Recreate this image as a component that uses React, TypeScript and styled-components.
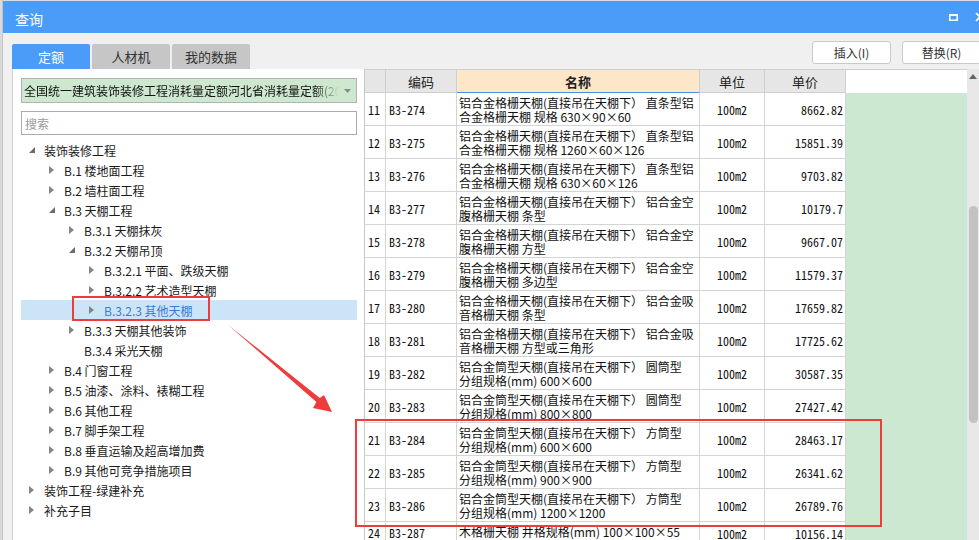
import React from "react";
import styled, { createGlobalStyle } from "styled-components";

const CJK = `"Noto Sans CJK SC", "Noto Sans", sans-serif`;
const MONO = `"Noto Sans Mono CJK SC", "Liberation Mono", monospace`;

const GlobalStyle = createGlobalStyle`
  html, body { margin: 0; padding: 0; }
  body { font-family: ${CJK}; font-size: 12px; color: #1a1a1a; }
  * { box-sizing: border-box; }
`;

const Page = styled.div`
  position: relative;
  width: 979px;
  height: 540px;
  overflow: hidden;
  display: flex;
  background: #e4e4e4;
`;

const Backdrop = styled.div`
  width: 3px;
  flex-shrink: 0;
  background: #dadada;
  border-right: 1px solid #c4c4c4;
`;

const Window = styled.div`
  flex: 1;
  min-width: 0;
  display: flex;
  flex-direction: column;
  background: #f0f0f0;
  border-top: 1px solid #d5dbe3;
`;

const TitleBar = styled.div`
  height: 32px;
  flex-shrink: 0;
  background: #4b9cf8;
  display: flex;
  align-items: center;
  padding: 3px 0 0 12px;
  color: #fff;
  font-size: 14px;
`;

const TitleIcons = styled.div`
  margin-left: auto;
  display: flex;
  align-items: center;
  gap: 17px;
  margin-right: -6px;
  padding-bottom: 3px;
`;

const Toolbar = styled.div`
  height: 36px;
  flex-shrink: 0;
  display: flex;
  padding-left: 9px;
`;

const Tabs = styled.div`
  display: flex;
  gap: 2px;
  align-self: flex-end;
`;

const Tab = styled.div<{ $active?: boolean }>`
  width: 78px;
  height: 25px;
  border-radius: 2px 2px 0 0;
  display: flex;
  align-items: center;
  justify-content: center;
  font-size: 13px;
  background: ${(p) => (p.$active ? "#4b9cf8" : "#c6c6c6")};
  color: ${(p) => (p.$active ? "#fff" : "#333")};
`;

const Actions = styled.div`
  margin-left: auto;
  margin-right: -2px;
  display: flex;
  gap: 11px;
  padding-top: 8px;
`;

const ActionButton = styled.div`
  width: 79px;
  height: 23px;
  background: #fff;
  border: 1px solid #c9c9c9;
  border-radius: 3px;
  display: flex;
  align-items: center;
  justify-content: center;
  font-size: 12px;
  color: #333;
`;

const Content = styled.div`
  flex: 1;
  min-height: 0;
  display: flex;
`;

const LeftPanel = styled.div`
  margin-left: 9px;
  width: 352px;
  flex-shrink: 0;
  background: #fff;
  border-left: 1px solid #d2d2d2;
  padding: 9px 7px 0 8px;
  display: flex;
  flex-direction: column;
`;

const Dropdown = styled.div`
  height: 25px;
  background: #cde8cf;
  border: 1px solid #b3b3b3;
  display: flex;
  align-items: center;
  padding-left: 2px;
`;

const DropdownText = styled.div`
  flex: 1;
  overflow: hidden;
  white-space: nowrap;
  font-size: 12px;
  color: #111;
  -webkit-mask-image: linear-gradient(to right, #000 92%, transparent 100%);
  mask-image: linear-gradient(to right, #000 92%, transparent 100%);
`;

const DropdownArrow = styled.div`
  width: 17px;
  display: flex;
  justify-content: center;
`;

const Search = styled.input`
  margin-top: 8px;
  height: 24px;
  border: 1px solid #ababab;
  padding: 0 0 0 3px;
  font-family: ${CJK};
  font-size: 12px;
  outline: none;
  &::placeholder { color: #9a9a9a; }
`;

const Tree = styled.div`
  margin-top: 5px;
  display: flex;
  flex-direction: column;
`;

const TreeRow = styled.div<{ $level: number; $selected?: boolean }>`
  height: 20px;
  display: flex;
  align-items: center;
  padding-left: ${(p) => 8 + p.$level * 20}px;
  background: ${(p) => (p.$selected ? "#cce4f7" : "transparent")};
  color: ${(p) => (p.$selected ? "#3a7bd5" : "#1a1a1a")};
  font-size: 12px;
  white-space: nowrap;
`;

const Toggle = styled.div`
  width: 15px;
  height: 20px;
  display: flex;
  align-items: center;
`;

const RightPanel = styled.div`
  flex: 1;
  min-width: 0;
  display: flex;
  border-left: 1px solid #c8c8c8;
`;

const Table = styled.div`
  width: 602px;
  flex-shrink: 0;
  display: flex;
  flex-direction: column;
  background: #fff;
`;

const COLS = "21px 71px 243px 65px 81px 121px";

const HeadRow = styled.div`
  display: grid;
  grid-template-columns: ${COLS};
  height: 24px;
  border-top: 1px solid #cfcfcf;
  flex-shrink: 0;
`;

const HeadCell = styled.div<{ $kind?: "name" | "blank" }>`
  display: flex;
  align-items: center;
  justify-content: center;
  font-size: 13px;
  color: #222;
  background: ${(p) => (p.$kind === "name" ? "#fee6c9" : p.$kind === "blank" ? "#fff" : "#e6e6e6")};
  border-right: ${(p) => (p.$kind === "blank" ? "none" : "1px solid #cfcfcf")};
  border-bottom: ${(p) =>
    p.$kind === "blank" ? "none" : p.$kind === "name" ? "1px solid #4a8fe0" : "1px solid #cfcfcf"};
  font-weight: ${(p) => (p.$kind === "name" ? 700 : 400)};
`;

const BodyRow = styled.div<{ $h: number }>`
  display: grid;
  grid-template-columns: ${COLS};
  height: ${(p) => p.$h}px;
  flex-shrink: 0;
`;

const Cell = styled.div`
  border-right: 1px solid #d4d4d4;
  border-bottom: 1px solid #d4d4d4;
  display: flex;
  align-items: center;
  overflow: hidden;
  white-space: nowrap;
  color: #111;
`;

const IndexCell = styled(Cell)`
  font-family: ${MONO};
  font-size: 12px;
  padding-left: 3px;
`;

const CodeCell = styled(Cell)`
  font-family: ${MONO};
  font-size: 12px;
  padding-left: 3px;
`;

const NameCell = styled(Cell)`
  flex-direction: column;
  align-items: flex-start;
  padding: 3px 0 0 2px;
  font-size: 12px;
  line-height: 13.5px;
`;

const UnitCell = styled(Cell)`
  justify-content: center;
  font-family: ${MONO};
  font-size: 12px;
  padding-top: 1px;
`;

const PriceCell = styled(Cell)`
  justify-content: flex-end;
  padding: 1px 2px 0 0;
  font-family: ${MONO};
  font-size: 12px;
`;

const GreenCell = styled.div`
  background: #cde8d0;
`;

const ScrollTrack = styled.div`
  width: 12px;
  flex-shrink: 0;
  background: #e8e8e8;
  display: flex;
  flex-direction: column;
  align-items: center;
  padding-top: 5px;
`;

const Thumb = styled.div`
  margin-top: 127px;
  width: 9px;
  height: 217px;
  border-radius: 5px;
  background: #c2c2c2;
`;

const RedBox = styled.div<{ $x: number; $y: number; $w: number; $h: number }>`
  position: absolute;
  left: ${(p) => p.$x}px;
  top: ${(p) => p.$y}px;
  width: ${(p) => p.$w}px;
  height: ${(p) => p.$h}px;
  border: 2px solid #ef3b3b;
  pointer-events: none;
`;

const ArrowSvg = styled.svg`
  position: absolute;
  left: 0;
  top: 0;
  pointer-events: none;
`;

type Node = { l: number; s: "open" | "closed" | "leaf"; t: string; sel?: boolean };

const tree: Node[] = [
  { l: 0, s: "open", t: "装饰装修工程" },
  { l: 1, s: "closed", t: "B.1 楼地面工程" },
  { l: 1, s: "closed", t: "B.2 墙柱面工程" },
  { l: 1, s: "open", t: "B.3 天棚工程" },
  { l: 2, s: "closed", t: "B.3.1 天棚抹灰" },
  { l: 2, s: "open", t: "B.3.2 天棚吊顶" },
  { l: 3, s: "closed", t: "B.3.2.1 平面、跌级天棚" },
  { l: 3, s: "closed", t: "B.3.2.2 艺术造型天棚" },
  { l: 3, s: "closed", t: "B.3.2.3 其他天棚", sel: true },
  { l: 2, s: "closed", t: "B.3.3 天棚其他装饰" },
  { l: 2, s: "leaf", t: "B.3.4 采光天棚" },
  { l: 1, s: "closed", t: "B.4 门窗工程" },
  { l: 1, s: "closed", t: "B.5 油漆、涂料、裱糊工程" },
  { l: 1, s: "closed", t: "B.6 其他工程" },
  { l: 1, s: "closed", t: "B.7 脚手架工程" },
  { l: 1, s: "closed", t: "B.8 垂直运输及超高增加费" },
  { l: 1, s: "closed", t: "B.9 其他可竞争措施项目" },
  { l: 0, s: "closed", t: "装饰工程-绿建补充" },
  { l: 0, s: "closed", t: "补充子目" },
];

const G = "铝合金格栅天棚(直接吊在天棚下） ";
const T = "铝合金筒型天棚(直接吊在天棚下） ";

type Row = { n: number; code: string; name: string[]; price: string };

const rows: Row[] = [
  { n: 11, code: "B3-274", name: [G + "直条型铝", "合金格栅天棚 规格 630×90×60"], price: "8662.82" },
  { n: 12, code: "B3-275", name: [G + "直条型铝", "合金格栅天棚 规格 1260×60×126"], price: "15851.39" },
  { n: 13, code: "B3-276", name: [G + "直条型铝", "合金格栅天棚 规格 630×60×126"], price: "9703.82" },
  { n: 14, code: "B3-277", name: [G + "铝合金空", "腹格栅天棚 条型"], price: "10179.7" },
  { n: 15, code: "B3-278", name: [G + "铝合金空", "腹格栅天棚 方型"], price: "9667.07" },
  { n: 16, code: "B3-279", name: [G + "铝合金空", "腹格栅天棚 多边型"], price: "11579.37" },
  { n: 17, code: "B3-280", name: [G + "铝合金吸", "音格栅天棚 条型"], price: "17659.82" },
  { n: 18, code: "B3-281", name: [G + "铝合金吸", "音格栅天棚 方型或三角形"], price: "17725.62" },
  { n: 19, code: "B3-282", name: [T + "圆筒型", "分组规格(mm) 600×600"], price: "30587.35" },
  { n: 20, code: "B3-283", name: [T + "圆筒型", "分组规格(mm) 800×800"], price: "27427.42" },
  { n: 21, code: "B3-284", name: [T + "方筒型", "分组规格(mm) 600×600"], price: "28463.17" },
  { n: 22, code: "B3-285", name: [T + "方筒型", "分组规格(mm) 900×900"], price: "26341.62" },
  { n: 23, code: "B3-286", name: [T + "方筒型", "分组规格(mm) 1200×1200"], price: "26789.76" },
  { n: 24, code: "B3-287", name: ["木格栅天棚 井格规格(mm) 100×100×55"], price: "10156.14" },
];

const ToggleIcon = ({ s }: { s: Node["s"] }) => {
  if (s === "leaf") return null;
  if (s === "open")
    return (
      <svg width="6" height="6" viewBox="0 0 6 6">
        <polygon points="6,0 6,6 0,6" fill="#6b6b6b" />
      </svg>
    );
  return (
    <svg width="5" height="8" viewBox="0 0 5 8">
      <polygon points="0,0 5,4 0,8" fill="#858585" />
    </svg>
  );
};

export default function App() {
  return (
    <>
      <GlobalStyle />
      <Page>
        <Backdrop />
        <Window>
          <TitleBar>
            查询
            <TitleIcons>
              <svg width="9" height="7" viewBox="0 0 9 7">
                <rect x="0.75" y="1" width="7.5" height="5.25" fill="none" stroke="#fff" strokeWidth="1.5" />
                <rect x="0" y="0" width="9" height="2" fill="#fff" />
              </svg>
              <svg width="10" height="10" viewBox="0 0 10 10">
                <path d="M1 1 L9 9 M9 1 L1 9" stroke="#fff" strokeWidth="1.6" />
              </svg>
            </TitleIcons>
          </TitleBar>
          <Toolbar>
            <Tabs>
              <Tab $active>定额</Tab>
              <Tab>人材机</Tab>
              <Tab>我的数据</Tab>
            </Tabs>
            <Actions>
              <ActionButton>插入(I)</ActionButton>
              <ActionButton>替换(R)</ActionButton>
            </Actions>
          </Toolbar>
          <Content>
            <LeftPanel>
              <Dropdown>
                <DropdownText>全国统一建筑装饰装修工程消耗量定额河北省消耗量定额(2012)</DropdownText>
                <DropdownArrow>
                  <svg width="7" height="4" viewBox="0 0 7 4">
                    <polygon points="0,0 7,0 3.5,4" fill="#8a8a8a" />
                  </svg>
                </DropdownArrow>
              </Dropdown>
              <Search placeholder="搜索" />
              <Tree>
                {tree.map((n, i) => (
                  <TreeRow key={i} $level={n.l} $selected={n.sel}>
                    <Toggle>
                      <ToggleIcon s={n.s} />
                    </Toggle>
                    {n.t}
                  </TreeRow>
                ))}
              </Tree>
            </LeftPanel>
            <RightPanel>
              <Table>
                <HeadRow>
                  <HeadCell />
                  <HeadCell>编码</HeadCell>
                  <HeadCell $kind="name">名称</HeadCell>
                  <HeadCell>单位</HeadCell>
                  <HeadCell>单价</HeadCell>
                  <HeadCell $kind="blank" />
                </HeadRow>
                {rows.map((r) => (
                  <BodyRow key={r.n} $h={r.name.length === 2 ? 33 : 22}>
                    <IndexCell>{r.n}</IndexCell>
                    <CodeCell>{r.code}</CodeCell>
                    <NameCell>
                      {r.name.map((line, i) => (
                        <span key={i}>{line}</span>
                      ))}
                    </NameCell>
                    <UnitCell>100m2</UnitCell>
                    <PriceCell>{r.price}</PriceCell>
                    <GreenCell />
                  </BodyRow>
                ))}
              </Table>
              <ScrollTrack>
                <svg width="8" height="5" viewBox="0 0 8 5">
                  <polygon points="0,5 8,5 4,0" fill="#666" />
                </svg>
                <Thumb />
              </ScrollTrack>
            </RightPanel>
          </Content>
        </Window>
        <RedBox $x={72} $y={296} $w={138} $h={25} />
        <RedBox $x={355} $y={419} $w={527} $h={108} />
        <ArrowSvg width="979" height="540" viewBox="0 0 979 540">
          <polygon
            points="227,324 319.8,398 324,395 332,412 313,408 316.4,401.9"
            fill="#ef3b3b"
          />
        </ArrowSvg>
      </Page>
    </>
  );
}
